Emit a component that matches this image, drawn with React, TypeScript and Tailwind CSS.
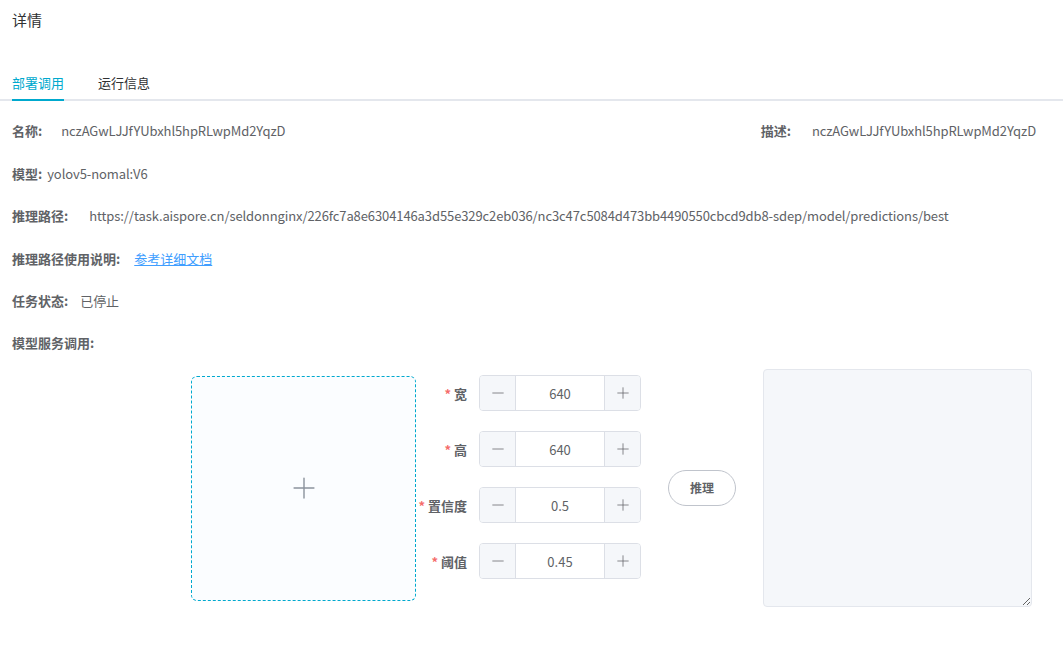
import { Plus, Minus } from 'lucide-react'

const fields = [
  { label: '宽', value: '640' },
  { label: '高', value: '640' },
  { label: '置信度', value: '0.5' },
  { label: '阈值', value: '0.45' },
]

function InfoRow({ label, gap, children }: { label: string; gap: string; children?: React.ReactNode }) {
  return (
    <div className="h-[42.4px] flex items-center">
      <span className="font-bold text-[#606266]">{label}:</span>
      <span className={`${gap} text-[#606266] tracking-[-0.1px]`}>{children}</span>
    </div>
  )
}

function NumberInput({ value }: { value: string }) {
  return (
    <div className="flex w-[162px] h-[36px] border border-[#dcdfe6] rounded-[4px] overflow-hidden">
      <button className="w-[36px] flex items-center justify-center bg-[#f5f7fa] border-r border-[#dcdfe6] text-[#606266]">
        <Minus size={18} strokeWidth={1} />
      </button>
      <div className="flex-1 flex items-center justify-center text-[#606266] bg-white">{value}</div>
      <button className="w-[36px] flex items-center justify-center bg-[#f5f7fa] border-l border-[#dcdfe6] text-[#606266]">
        <Plus size={18} strokeWidth={1} />
      </button>
    </div>
  )
}

export default function App() {
  return (
    <div className="min-h-screen bg-white text-[13px] font-[family-name:'Segoe_UI','Noto_Sans_CJK_SC',sans-serif]">
      {/* Header */}
      <div className="h-[40px] flex items-center px-[12px] text-[15px] text-[#303133]">详情</div>

      {/* Tabs */}
      <div className="mt-[33px] flex gap-[34px] pl-[12px] border-b-2 border-[#e4e7ed] leading-[20px]">
        <div className="pb-[6px] -mb-[2px] border-b-2 border-[#00a9ce] text-[#00a9ce]">部署调用</div>
        <div className="pb-[6px] text-[#303133]">运行信息</div>
      </div>

      {/* Info */}
      <div className="mt-[9px] px-[12px]">
        <div className="flex justify-between pr-[15px]">
          <InfoRow label="名称" gap="ml-[19px]">nczAGwLJJfYUbxhl5hpRLwpMd2YqzD</InfoRow>
          <InfoRow label="描述" gap="ml-[21px]">nczAGwLJJfYUbxhl5hpRLwpMd2YqzD</InfoRow>
        </div>
        <InfoRow label="模型" gap="ml-[5px]">yolov5-nomal:V6</InfoRow>
        <InfoRow label="推理路径" gap="ml-[21px]">
          https://task.aispore.cn/seldonnginx/226fc7a8e6304146a3d55e329c2eb036/nc3c47c5084d473bb4490550cbcd9db8-sdep/model/predictions/best
        </InfoRow>
        <div className="h-[42.4px] flex items-center">
          <span className="font-bold text-[#606266]">推理路径使用说明:</span>
          <a className="ml-[14px] text-[#409eff] underline">参考详细文档</a>
        </div>
        <InfoRow label="任务状态" gap="ml-[12px]">已停止</InfoRow>
        <div className="h-[42.4px] flex items-center">
          <span className="font-bold text-[#606266]">模型服务调用:</span>
        </div>
      </div>

      {/* Model service */}
      <div className="mt-[5px] pl-[191px] flex items-center">
        <div className="w-[225px] h-[225px] border border-dashed border-[#00a9ce] rounded-[6px] bg-[#fbfdff] flex items-center justify-center text-[#8c939d]">
          <Plus size={34} strokeWidth={1} />
        </div>

        <div className="self-start mt-[6px] flex flex-col gap-[20px]">
          {fields.map((f) => (
            <div key={f.label} className="flex items-center">
              <label className="w-[63px] pr-[12px] text-right font-bold text-[#606266]">
                <span className="text-[#f56c6c] mr-[3px]">*</span>
                {f.label}
              </label>
              <NumberInput value={f.value} />
            </div>
          ))}
        </div>

        <button className="ml-[27px] w-[68px] h-[36px] rounded-full border border-[#c0c4cc] text-[#606266] font-bold text-[12px] bg-white">
          推理
        </button>

        <textarea className="ml-[27px] w-[269px] h-[238px] bg-[#f5f7fa] border border-[#e4e7ed] rounded-[4px] outline-none" />
      </div>
    </div>
  )
}
